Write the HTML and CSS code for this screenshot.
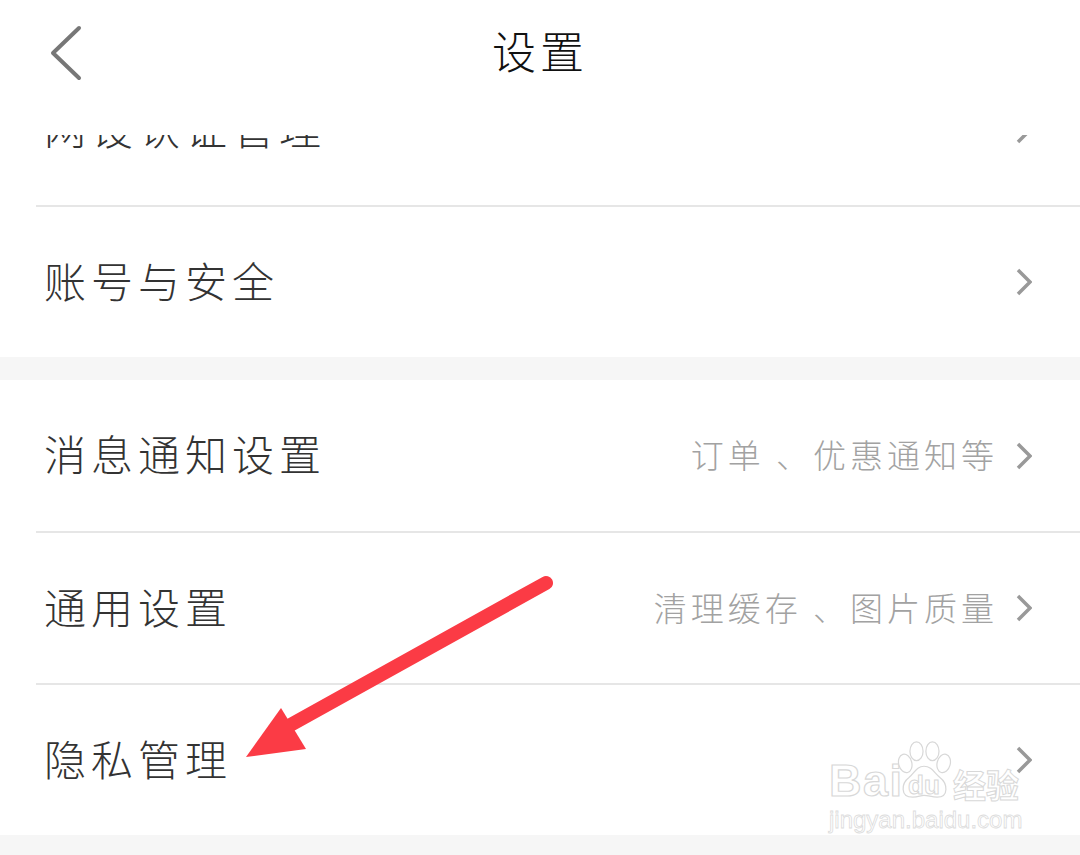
FILE: index.html
```html
<!DOCTYPE html>
<html lang="zh-CN">
<head>
<meta charset="utf-8">
<title>设置</title>
<link rel="stylesheet" href="styles.css">
</head>
<body>
<div class="screen">
  <header class="topbar">
    <svg class="back" viewBox="0 0 32 58" width="32" height="58"><path d="M29 3 L3 28 L29 53"/></svg>
    <h1 class="title">设置</h1>
  </header>
  <main class="list">
    <section class="group">
      <div class="row row-clipped">
        <span class="label">网设认证管理</span>
        <span class="side"><svg class="chev" viewBox="0 0 16 28" width="16" height="28"><path d="M2 2 L14 14 L2 26"/></svg></span>
      </div>
      <div class="row">
        <span class="label">账号与安全</span>
        <span class="side"><svg class="chev" viewBox="0 0 16 28" width="16" height="28"><path d="M2 2 L14 14 L2 26"/></svg></span>
      </div>
    </section>
    <section class="group">
      <div class="row row-tall">
        <span class="label">消息通知设置</span>
        <span class="side"><span class="hint">订单 、优惠通知等</span><svg class="chev" viewBox="0 0 16 28" width="16" height="28"><path d="M2 2 L14 14 L2 26"/></svg></span>
      </div>
      <div class="row">
        <span class="label">通用设置</span>
        <span class="side"><span class="hint">清理缓存 、图片质量</span><svg class="chev" viewBox="0 0 16 28" width="16" height="28"><path d="M2 2 L14 14 L2 26"/></svg></span>
      </div>
      <div class="row">
        <span class="label">隐私管理</span>
        <span class="side"><svg class="chev" viewBox="0 0 16 28" width="16" height="28"><path d="M2 2 L14 14 L2 26"/></svg></span>
      </div>
    </section>
  </main>
  <svg class="pointer" viewBox="0 0 1080 855" width="1080" height="855">
    <path class="pointer-shaft" d="M546 583 L285 728"/>
    <polygon class="pointer-head" points="246,757 281,708 306,749"/>
  </svg>
  <div class="mark">
    <div class="mark-top">
      <span class="mark-bai">Bai</span>
      <svg class="paw" viewBox="0 0 64 62" width="60" height="60">
        <ellipse cx="12" cy="24" rx="7" ry="10" transform="rotate(-15 12 24)"/>
        <ellipse cx="24" cy="11" rx="7" ry="10"/>
        <ellipse cx="41" cy="11" rx="7" ry="10"/>
        <ellipse cx="53" cy="24" rx="7" ry="10" transform="rotate(15 53 24)"/>
        <path d="M32 27 C24 27 22 34 16 39 C8 45 6 60 20 60 C26 60 28 58 32 58 C37 58 40 60 46 60 C59 60 57 45 49 39 C43 34 40 27 32 27 Z"/>
      </svg>
      <span class="mark-du">du</span>
      <span class="mark-cn">经验</span>
    </div>
    <div class="mark-url">jingyan.baidu.com</div>
  </div>
</div>
</body>
</html>
```
FILE: styles.css
```css
* { box-sizing: border-box; }
html, body { margin: 0; padding: 0; background: #fff; }
body { font-family: "Noto Sans CJK SC", "Noto Sans CJK TC", sans-serif; }

.screen {
  position: relative;
  width: 1080px;
  height: 855px;
  overflow: hidden;
  background: #f6f6f6;
}

.topbar {
  position: relative;
  z-index: 2;
  height: 135px;
  padding-bottom: 35px;
  display: flex;
  align-items: center;
  justify-content: center;
  background: #fff;
}
.back {
  position: absolute;
  left: 50px;
  top: 25px;
  fill: none;
  stroke: #777;
  stroke-width: 4;
  stroke-linecap: round;
  stroke-linejoin: round;
}
.title {
  margin: 0;
  font-size: 44px;
  font-weight: 300;
  letter-spacing: 4px;
  color: #111;
  line-height: 60px;
}

.list { display: flex; flex-direction: column; }
.group {
  display: flex;
  flex-direction: column;
  background: #fff;
  margin-bottom: 23px;
}
.row {
  height: 152px;
  margin-left: 36px;
  padding: 0 48px 0 8px;
  display: flex;
  align-items: center;
  justify-content: space-between;
  border-bottom: 2px solid #e6e6e6;
}
.row-tall { height: 153px; }
.row:last-child { border-bottom: 0; height: 150px; }
.row-clipped { margin-top: -81px; height: 153px; }

.label {
  margin-bottom: 5px;
  font-size: 42px;
  font-weight: 300;
  letter-spacing: 5px;
  color: #333;
  line-height: 60px;
  white-space: nowrap;
}
.side { display: flex; align-items: center; gap: 18px; }
.hint {
  margin-bottom: 3px;
  font-size: 33px;
  font-weight: 300;
  letter-spacing: 4px;
  color: #a2a2a2;
  white-space: pre;
}
.chev {
  display: block;
  fill: none;
  stroke: #999;
  stroke-width: 3.5;
  stroke-linejoin: miter;
}

.pointer { position: absolute; left: 0; top: 0; z-index: 3; pointer-events: none; }
.pointer-shaft { fill: none; stroke: #fb3b45; stroke-width: 14; stroke-linecap: round; }
.pointer-head { fill: #fb3b45; }

.mark {
  position: absolute;
  z-index: 4;
  left: 829px;
  top: 738px;
  width: 196px;
  color: #fff;
  font-family: "Liberation Sans", sans-serif;
}
.mark-top {
  position: relative;
  height: 66px;
  display: flex;
  align-items: flex-end;
}
.mark-bai {
  font-size: 45px;
  font-weight: 700;
  line-height: 46px;
  letter-spacing: 1.5px;
  color: #fff;
  -webkit-text-stroke: 1.2px #d8d8d8;
}
.paw {
  position: absolute;
  left: 65px;
  top: 2px;
  fill: #fff;
  stroke: #d8d8d8;
  stroke-width: 1.3;
}
.mark-du {
  position: absolute;
  left: 79px;
  top: 33px;
  font-size: 26px;
  font-weight: 700;
  line-height: 28px;
  color: #fff;
  -webkit-text-stroke: 1px #d8d8d8;
}
.mark-cn {
  position: absolute;
  left: 124px;
  top: 26px;
  font-family: "Noto Sans CJK SC", sans-serif;
  font-size: 33px;
  font-weight: 700;
  line-height: 40px;
  color: #fff;
  -webkit-text-stroke: 1px #d8d8d8;
}
.mark-url {
  margin-top: 3px;
  font-size: 24px;
  line-height: 26px;
  color: #fff;
  -webkit-text-stroke: 0.8px #dcdcdc;
  white-space: nowrap;
}
```
